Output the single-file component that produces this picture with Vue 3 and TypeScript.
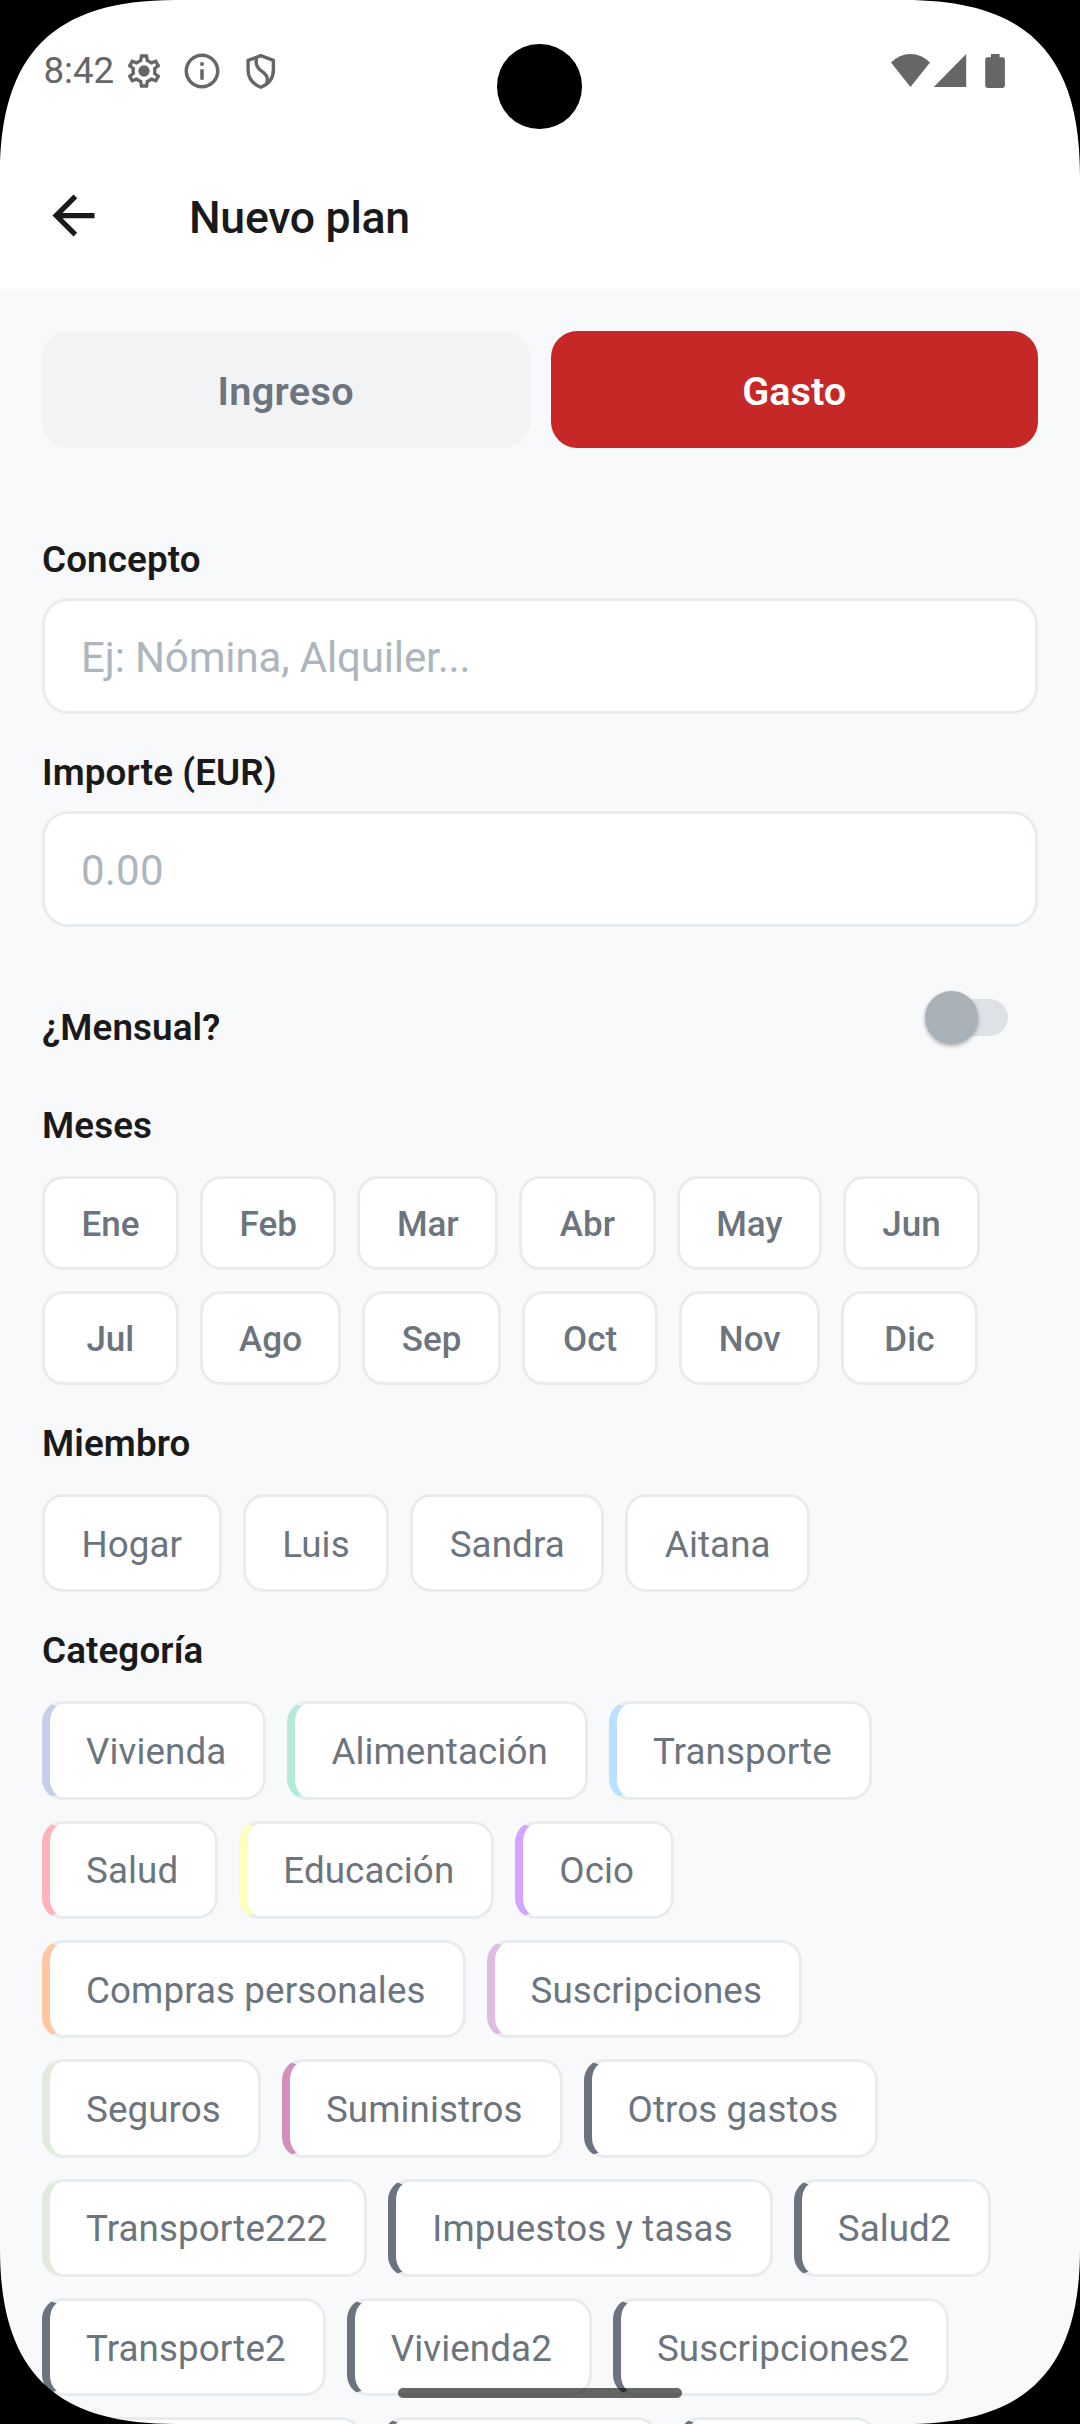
<script setup lang="ts">
import { ref } from 'vue'

interface Category {
  name: string
  color: string
  width?: number
}

const kind = ref<'income' | 'expense'>('expense')
const concept = ref('')
const amount = ref('')
const monthly = ref(false)

const months: string[] = ['Ene', 'Feb', 'Mar', 'Abr', 'May', 'Jun', 'Jul', 'Ago', 'Sep', 'Oct', 'Nov', 'Dic']
const members: string[] = ['Hogar', 'Luis', 'Sandra', 'Aitana']

const categories: Category[] = [
  { name: 'Vivienda', color: '#c7ceea' },
  { name: 'Alimentación', color: '#b5ead7' },
  { name: 'Transporte', color: '#bae1ff' },
  { name: 'Salud', color: '#ffb3ba' },
  { name: 'Educación', color: '#ffffba' },
  { name: 'Ocio', color: '#d4a5ff' },
  { name: 'Compras personales', color: '#ffc8a2' },
  { name: 'Suscripciones', color: '#e0bbe4' },
  { name: 'Seguros', color: '#e2ecde' },
  { name: 'Suministros', color: '#d291bc' },
  { name: 'Otros gastos', color: '#6b7280' },
  { name: 'Transporte222', color: '#e2ecde' },
  { name: 'Impuestos y tasas', color: '#6b7280' },
  { name: 'Salud2', color: '#6b7280' },
  { name: 'Transporte2', color: '#6b7280' },
  { name: 'Vivienda2', color: '#6b7280' },
  { name: 'Suscripciones2', color: '#6b7280' },
  // The next row is only just scrolled into view
  { name: '', color: '#6b7280', width: 320 },
  { name: '', color: '#6b7280', width: 275 },
  { name: '', color: '#6b7280', width: 198 },
]
</script>

<template>
  <div class="screen">
    <div class="status">
      <div class="status-left">
        <span class="time">8:42</span>
        <svg class="gear" viewBox="0 0 24 24">
          <path fill-rule="evenodd" d="M19.43 12.98c.04-.32.07-.64.07-.98 0-.34-.03-.66-.07-.98l2.11-1.65c.19-.15.24-.42.12-.64l-2-3.46c-.09-.16-.26-.25-.44-.25-.06 0-.12.01-.17.03l-2.49 1c-.52-.4-1.08-.73-1.69-.98l-.38-2.65C14.46 2.18 14.25 2 14 2h-4c-.25 0-.46.18-.49.42l-.38 2.65c-.61.25-1.17.59-1.69.98l-2.49-1c-.06-.02-.12-.03-.18-.03-.17 0-.34.09-.43.25l-2 3.46c-.13.22-.07.49.12.64l2.11 1.65c-.04.32-.07.65-.07.98 0 .33.03.66.07.98l-2.11 1.65c-.19.15-.24.42-.12.64l2 3.46c.09.16.26.25.44.25.06 0 .12-.01.17-.03l2.49-1c.52.4 1.08.73 1.69.98l.38 2.65c.03.24.24.42.49.42h4c.25 0 .46-.18.49-.42l.38-2.65c.61-.25 1.17-.59 1.69-.98l2.49 1c.06.02.12.03.18.03.17 0 .34-.09.43-.25l2-3.46c.12-.22.07-.49-.12-.64l-2.11-1.65zm-1.98-1.71c.04.31.05.52.05.73 0 .21-.02.43-.05.73l-.14 1.13.89.7 1.08.84-.7 1.21-1.27-.51-1.04-.42-.9.68c-.43.32-.84.56-1.25.73l-1.06.43-.16 1.13-.2 1.35h-1.4l-.19-1.35-.16-1.13-1.06-.43c-.43-.18-.83-.41-1.23-.71l-.91-.7-1.06.43-1.27.51-.7-1.21 1.08-.84.89-.7-.14-1.13c-.03-.31-.05-.54-.05-.74s.02-.43.05-.73l.14-1.13-.89-.7-1.08-.84.7-1.21 1.27.51 1.04.42.9-.68c.43-.32.84-.56 1.25-.73l1.06-.43.16-1.13.2-1.35h1.39l.19 1.35.16 1.13 1.06.43c.43.18.83.41 1.23.71l.91.7 1.06-.43 1.27-.51.7 1.21-1.07.85-.89.7.14 1.13z" />
          <circle cx="12" cy="12" r="3.4" />
        </svg>
        <svg class="info" viewBox="0 0 24 24">
          <path d="M11 7h2v2h-2zm0 4h2v6h-2zm1-9C6.48 2 2 6.48 2 12s4.48 10 10 10 10-4.48 10-10S17.52 2 12 2zm0 18c-4.41 0-8-3.59-8-8s3.59-8 8-8 8 3.59 8 8-3.59 8-8 8z" />
        </svg>
        <svg class="shield" viewBox="0 0 42 42">
          <path d="M20.8 5.7 33.4 10.4V20C33.4 28 28.3 34.2 20.8 37.3 13.3 34.2 8.1 28 8.1 20V10.4Z" />
          <path d="M16.6 8C15.3 13 16.6 17 20.4 20.2C26 24 28.8 27 26.6 33.4" />
        </svg>
      </div>
      <svg class="signals" viewBox="0 0 116 36">
        <path d="M0 9.6Q8.5 1 19.5 1T39 9.6L19.5 34Z" />
        <path d="M42.8 34 75.2 1V34Z" />
        <path d="M100 1h8.6v3.2h2.9a2.4 2.4 0 0 1 2.4 2.4V32.6a2.4 2.4 0 0 1-2.4 2.4H96.6a2.4 2.4 0 0 1-2.4-2.4V6.6a2.4 2.4 0 0 1 2.4-2.4H100Z" />
      </svg>
    </div>
    <header class="appbar">
      <svg class="back" viewBox="0 0 24 24">
        <path d="M20 11H7.83l5.59-5.59L12 4l-8 8 8 8 1.41-1.41L7.83 13H20v-2z" />
      </svg>
      <h1 class="title">Nuevo plan</h1>
    </header>

    <main class="form">
      <div class="kinds">
        <button class="kind" :class="{ active: kind === 'income' }" @click="kind = 'income'">Ingreso</button>
        <button class="kind" :class="{ active: kind === 'expense' }" @click="kind = 'expense'">Gasto</button>
      </div>

      <label class="label first">Concepto</label>
      <input v-model="concept" class="field" placeholder="Ej: Nómina, Alquiler..." />

      <label class="label">Importe (EUR)</label>
      <input v-model="amount" class="field amount" placeholder="0.00" />

      <div class="monthly">
        <span class="label">¿Mensual?</span>
        <div class="switch" @click="monthly = !monthly"><i class="track"></i><i class="thumb"></i></div>
      </div>

      <div class="label months-label">Meses</div>
      <div class="chips">
        <button v-for="m in months" :key="m" class="chip month">{{ m }}</button>
      </div>

      <div class="label">Miembro</div>
      <div class="chips">
        <button v-for="m in members" :key="m" class="chip">{{ m }}</button>
      </div>

      <div class="label">Categoría</div>
      <div class="chips">
        <button
          v-for="(c, i) in categories"
          :key="i"
          class="chip category"
          :style="{ borderLeftColor: c.color, width: c.width ? c.width + 'px' : undefined }"
        >{{ c.name }}</button>
      </div>
    </main>

    <div class="home-bar"></div>
    <div class="camera"></div>
    <svg class="corner tl" viewBox="0 0 175 175"><path d="M0 0V175C0 53.7 53.7 0 175 0Z" /></svg>
    <svg class="corner tr" viewBox="0 0 175 175"><path d="M0 0V175C0 53.7 53.7 0 175 0Z" /></svg>
    <svg class="corner bl" viewBox="0 0 175 175"><path d="M0 0V175C0 53.7 53.7 0 175 0Z" /></svg>
    <svg class="corner br" viewBox="0 0 175 175"><path d="M0 0V175C0 53.7 53.7 0 175 0Z" /></svg>
  </div>
</template>

<style>
body {
  margin: 0;
}
</style>

<style scoped>
.screen {
  position: relative;
  width: 1080px;
  height: 2424px;
  overflow: hidden;
  background: #f8f9fb;
  font-family: Roboto, 'Noto Sans', sans-serif;
  color: #1a1a1a;
}
.screen * {
  box-sizing: border-box;
}
button,
input {
  margin: 0;
  font-family: inherit;
}
svg {
  display: block;
  flex: none;
}

/* Status bar */
.status {
  display: flex;
  justify-content: space-between;
  height: 142px;
  padding: 49.5px 73px 0 43.4px;
  background: #fff;
  fill: #666;
}
.status-left {
  display: flex;
  height: 43px;
  align-items: center;
}
.time {
  width: 80.6px;
  font-size: 36.75px;
  line-height: 42px;
  color: #666;
}
.gear {
  width: 40px;
  height: 40px;
}
.info {
  width: 42px;
  height: 42px;
  margin-left: 17.5px;
}
.shield {
  width: 42px;
  height: 42px;
  margin-left: 16.5px;
  fill: none;
  stroke: #666;
  stroke-width: 3.4;
  stroke-linejoin: round;
}
.signals {
  width: 116px;
  height: 36px;
  margin-top: 3.5px;
}

/* App bar */
.appbar {
  display: flex;
  align-items: center;
  height: 147px;
  padding-left: 42px;
  background: #fff;
}
.back {
  width: 63px;
  height: 63px;
  fill: #1a1a1a;
}
.title {
  margin: 5px 0 0 84px;
  font-size: 44.625px;
  font-weight: 500;
  line-height: 60px;
  letter-spacing: -0.28px;
}

/* Form */
.form {
  display: flex;
  flex-direction: column;
  padding: 42px 42px 0;
}
.kinds {
  display: flex;
  gap: 21px;
}
.kind {
  flex: 1;
  height: 117px;
  padding: 4px 0 0;
  border: 0;
  border-radius: 26.25px;
  background: #f1f3f5;
  color: #6c757d;
  font-size: 39.7px;
  font-weight: 600;
  letter-spacing: 0.35px;
}
.kind.active {
  background: #c62828;
  color: #fff;
  letter-spacing: 0;
}
.label {
  margin-top: 34px;
  font-size: 36.75px;
  font-weight: 600;
  line-height: 49px;
  letter-spacing: 0.12px;
}
.label.first {
  margin-top: 87px;
}
.field {
  width: 100%;
  height: 116px;
  margin-top: 14px;
  padding: 3px 36px 0;
  border: 3px solid #e9ecef;
  border-radius: 26.25px;
  outline: 0;
  background: #fff;
  color: #1a1a1a;
  font-size: 42px;
  letter-spacing: -0.13px;
}
.field.amount {
  letter-spacing: 0.2px;
}
.field::placeholder {
  color: #adb5bd;
  opacity: 1;
}
.monthly {
  display: flex;
  justify-content: space-between;
  align-items: flex-start;
  height: 61px;
  margin-top: 64px;
  padding-right: 30px;
}
.monthly .label {
  margin-top: 12px;
}
.switch {
  position: relative;
  display: flex;
  align-items: center;
  width: 83px;
  height: 53px;
}
.track {
  width: 76px;
  height: 37px;
  margin-left: 7px;
  border-radius: 18.5px;
  background: #dee2e6;
}
.thumb {
  position: absolute;
  left: 0;
  top: 0;
  width: 53px;
  height: 53px;
  border-radius: 50%;
  background: #a9b1b9;
  box-shadow: 0 2px 4px rgba(0, 0, 0, 0.32);
}
.months-label {
  margin-top: 49px;
}
.chips {
  display: flex;
  flex-wrap: wrap;
  gap: 21px;
  margin-top: 26px;
}
.chip {
  height: 98.33px;
  padding: 2px 36.6px 0 36.4px;
  border: 3px solid #e9ecef;
  border-radius: 21px;
  background: #fff;
  color: #6c757d;
  font-size: 36.75px;
  letter-spacing: 0.1px;
  white-space: nowrap;
}
.chip.month {
  min-width: 136.7px;
  height: 94px;
  padding: 3px 36.4px 0;
  font-size: 35px;
  font-weight: 500;
  letter-spacing: 0;
}
.chip.category {
  padding-left: 36px;
  padding-right: 37px;
  border-left-width: 8px;
}

/* Device overlays */
.home-bar {
  position: absolute;
  left: 398px;
  top: 2388px;
  width: 284px;
  height: 10px;
  border-radius: 5px;
  background: rgba(0, 0, 0, 0.6);
}
.camera {
  position: absolute;
  left: 497.3px;
  top: 44px;
  width: 84.5px;
  height: 84.5px;
  border-radius: 50%;
  background: #000;
}
.corner {
  position: absolute;
  width: 175px;
  height: 175px;
}
.tl {
  left: 0;
  top: 0;
}
.tr {
  right: 0;
  top: 0;
  transform: scaleX(-1);
}
.bl {
  left: 0;
  bottom: 0;
  transform: scaleY(-1);
}
.br {
  right: 0;
  bottom: 0;
  transform: scale(-1);
}
</style>
